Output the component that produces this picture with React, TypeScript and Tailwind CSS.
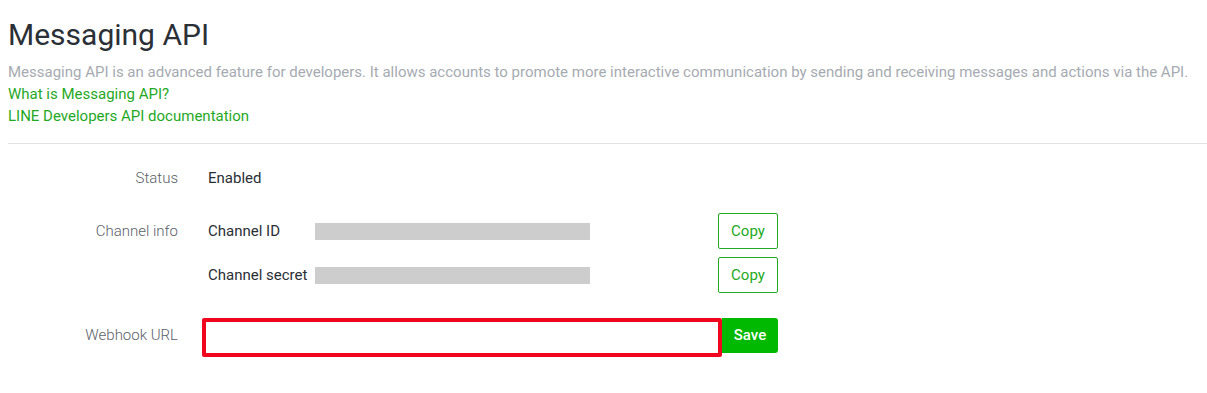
const font = { fontFamily: 'Roboto, "Liberation Sans", sans-serif' };

function Row({ label, children, className, labelClass }: { label: string; children: React.ReactNode; className?: string; labelClass?: string }) {
  return (
    <div className={`flex items-start ${className ?? ""}`}>
      <div className={`w-[170px] shrink-0 flex items-center justify-end text-[15px] text-[#5b6168] font-light ${labelClass ?? ""}`}>{label}</div>
      <div className="ml-[30px] flex-1">{children}</div>
    </div>
  );
}

function Secret({ name }: { name: string }) {
  return (
    <div className="flex items-center h-[36px]">
      <span className="w-[107px] text-[15px] text-[#2a2f35]">{name}</span>
      <div className="w-[275px] h-[17px] bg-[#cdcdcd]" />
      <button className="ml-[128px] w-[60px] h-[36px] border border-[#22aa22] rounded-[2px] text-[15px] text-[#22aa22] bg-white">
        Copy
      </button>
    </div>
  );
}

export default function App() {
  return (
    <div className="w-[1207px] h-[393px] bg-white pl-[8px] overflow-hidden" style={font}>
      <h1 className="pt-[17px] text-[30px] leading-[36px] text-[#2b3036]">Messaging API</h1>
      <p className="mt-[8px] text-[15px] leading-[22px] text-[#a6abb1] whitespace-nowrap">
        Messaging API is an advanced feature for developers. It allows accounts to promote more interactive communication by sending and receiving messages and actions via the API.
      </p>
      <div className="flex flex-col items-start text-[15px] leading-[22px] text-[#1fa91f]">
        <a href="#">What is Messaging API?</a>
        <a href="#">LINE Developers API documentation</a>
      </div>
      <div className="mt-[16px] border-t border-[#e2e2e2]" />

      <Row label="Status" className="mt-[24px]" labelClass="h-[20px]">
        <div className="h-[20px] flex items-center text-[15px] text-[#2a2f35]">Enabled</div>
      </Row>

      <Row label="Channel info" className="mt-[25px]" labelClass="h-[36px]">
        <div className="flex flex-col gap-[8px]">
          <Secret name="Channel ID" />
          <Secret name="Channel secret" />
        </div>
      </Row>

      <Row label="Webhook URL" className="mt-[25px]" labelClass="h-[35px]">
        <div className="flex items-start -ml-[6px]">
          <input className="w-[520px] h-[39px] border-[4px] border-[#f0061f] rounded-[2px] outline-none" />
          <button className="w-[56px] h-[35px] bg-[#00b900] rounded-r-[3px] text-[15px] font-medium text-white">
            Save
          </button>
        </div>
      </Row>
    </div>
  );
}
